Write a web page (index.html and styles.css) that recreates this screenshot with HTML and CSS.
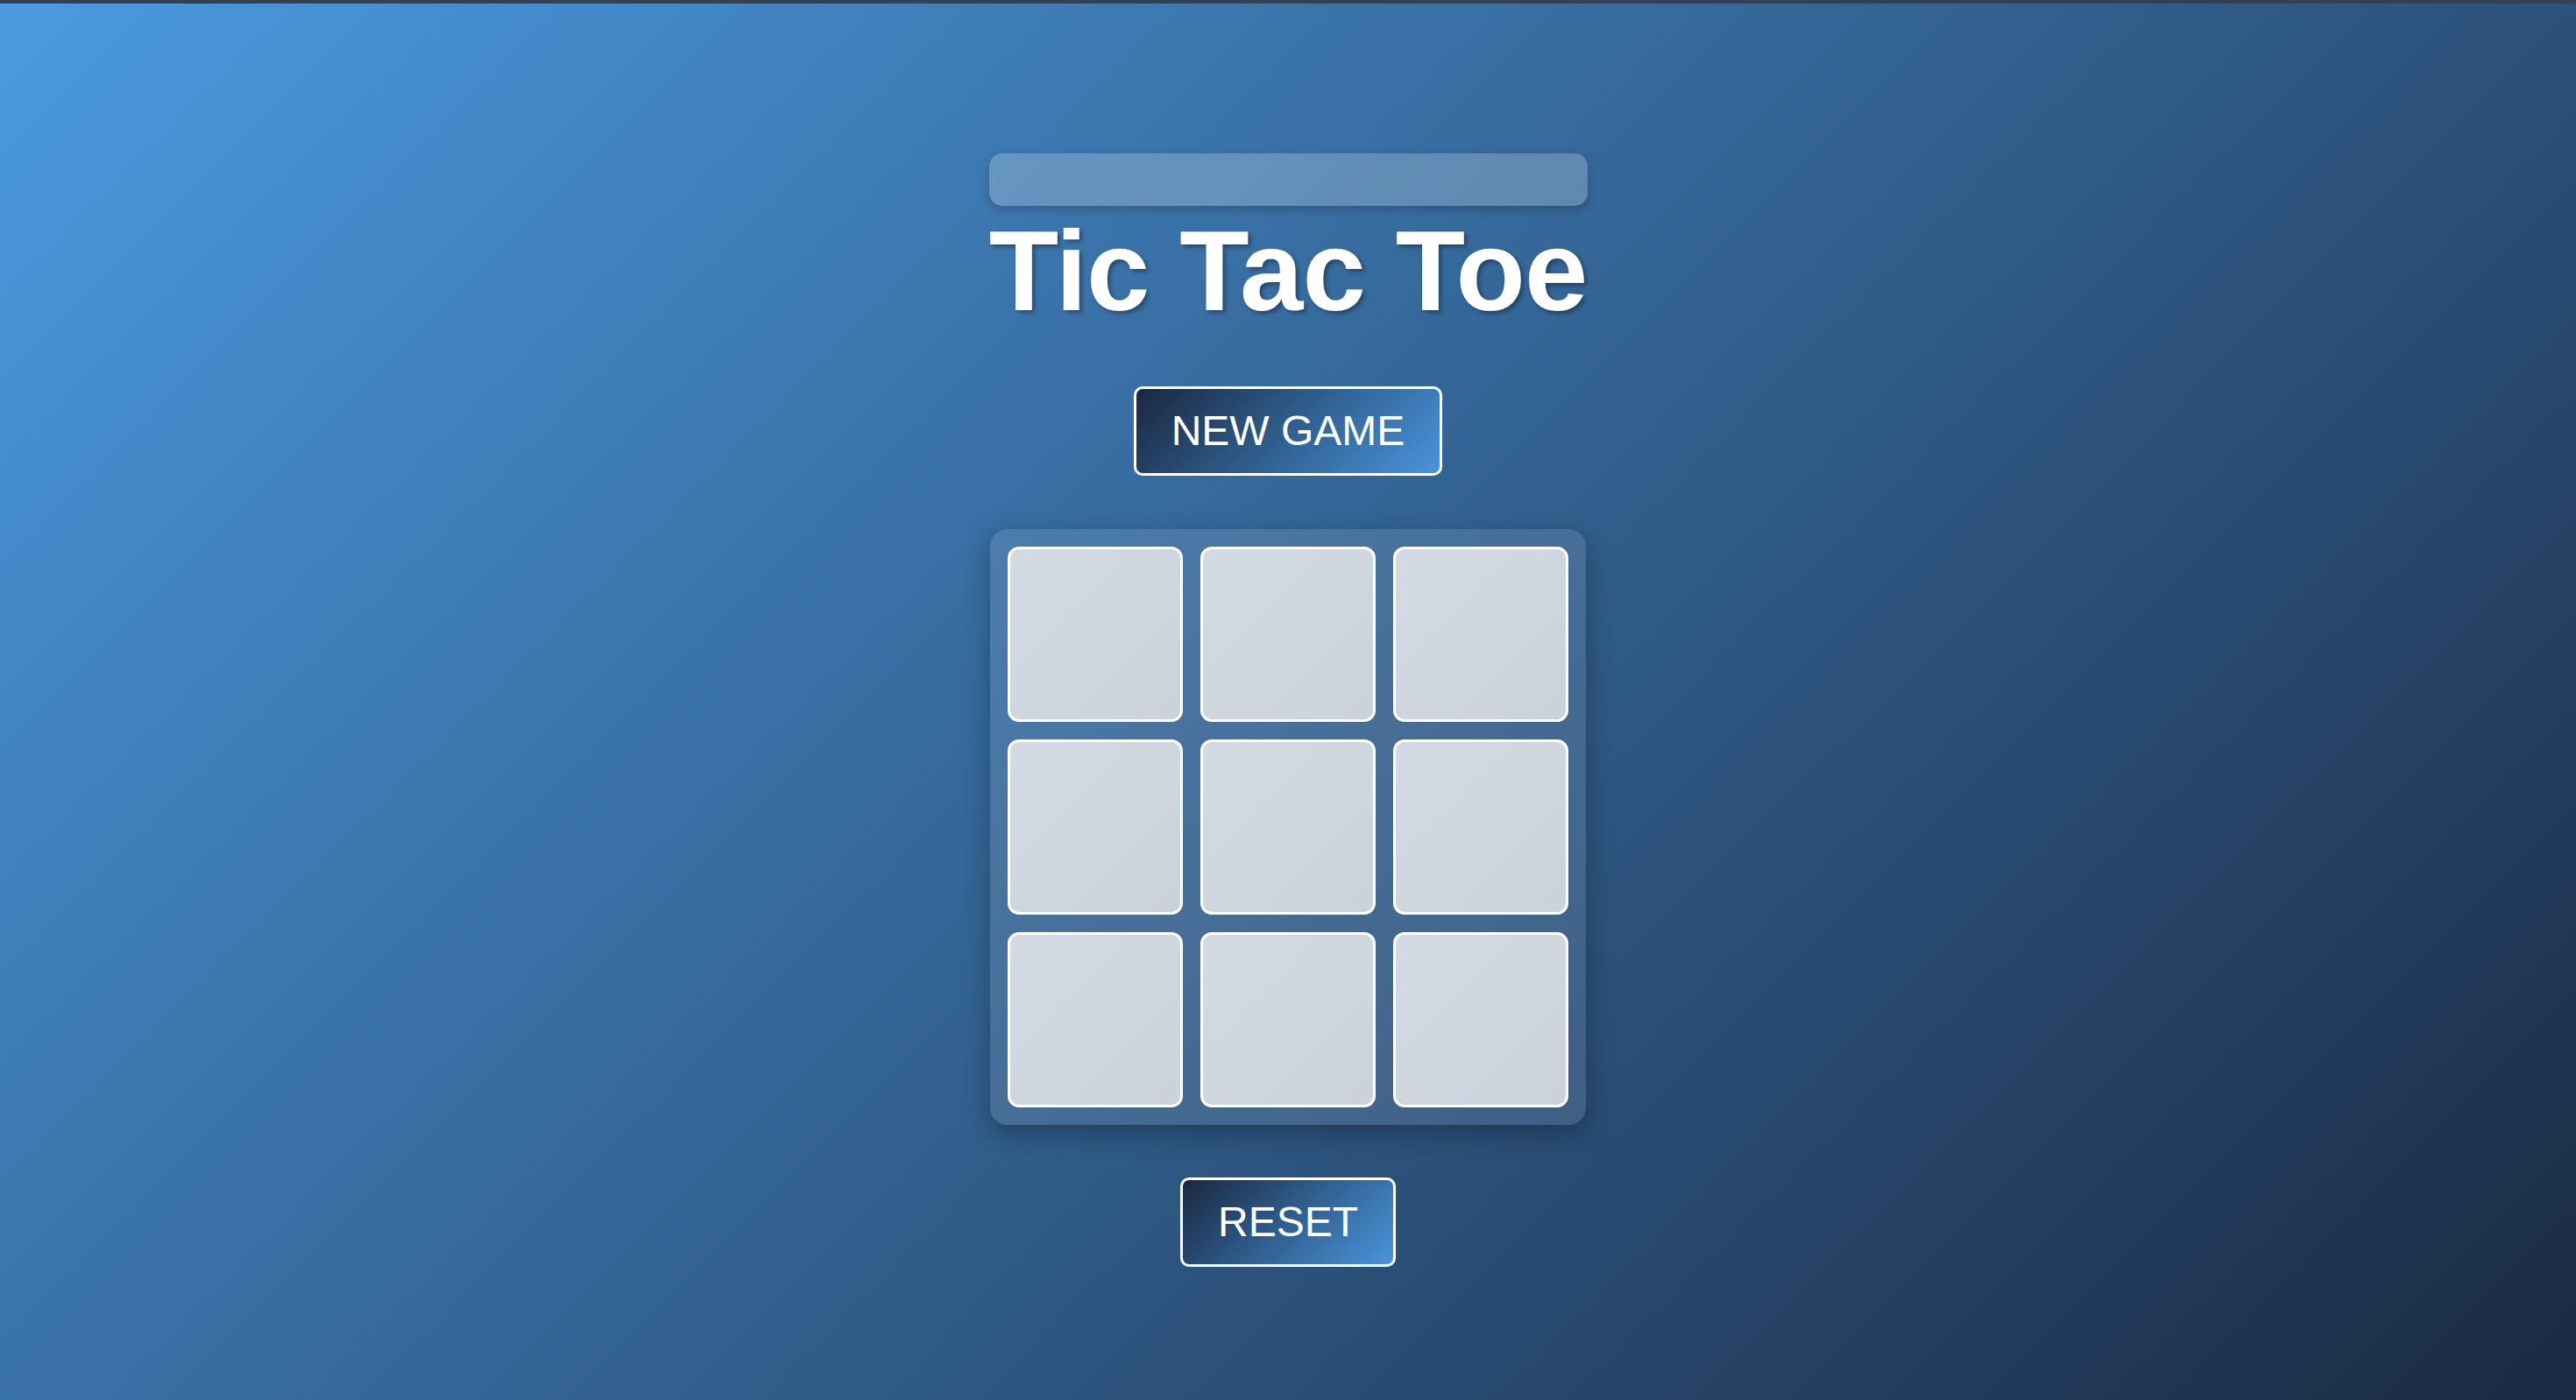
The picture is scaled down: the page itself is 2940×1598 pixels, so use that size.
FILE: index.html
```html
<!DOCTYPE html>
<html lang="en">
<head>
<meta charset="utf-8">
<title>Tic Tac Toe</title>
<link rel="stylesheet" href="styles.css">
</head>
<body>
<div class="topline"></div>
<main class="game">
  <div class="status"></div>
  <h1 class="title">Tic Tac Toe</h1>
  <button class="btn btn-new">NEW GAME</button>
  <div class="board">
    <div class="cell"></div>
    <div class="cell"></div>
    <div class="cell"></div>
    <div class="cell"></div>
    <div class="cell"></div>
    <div class="cell"></div>
    <div class="cell"></div>
    <div class="cell"></div>
    <div class="cell"></div>
  </div>
  <button class="btn btn-reset">RESET</button>
</main>
</body>
</html>
```
FILE: styles.css
```css
html, body {
  margin: 0;
  padding: 0;
  height: 100%;
}

body {
  font-family: "Liberation Sans", Arial, sans-serif;
  background: linear-gradient(135deg, #4b9ae0 0%, #1a2942 100%);
  overflow: hidden;
}

.topline {
  height: 4px;
  background: #363f4e;
}

.game {
  display: flex;
  flex-direction: column;
  align-items: center;
  padding-top: 171px;
}

.status {
  width: 683px;
  height: 60px;
  border-radius: 15px;
  background: rgba(255, 255, 255, 0.22);
  box-shadow: 0 4px 12px rgba(0, 0, 0, 0.2);
}

.title {
  margin: 0 0 57px;
  font-size: 130px;
  font-weight: 700;
  line-height: 149px;
  color: #ffffff;
  letter-spacing: -1px;
  text-shadow: 3px 3px 5px rgba(0, 0, 0, 0.35);
}

.btn {
  font-family: "Liberation Sans", Arial, sans-serif;
  font-size: 48px;
  line-height: 56px;
  color: #ffffff;
  padding: 20px 40px;
  border: 3px solid #ffffff;
  border-radius: 10px;
  background: linear-gradient(135deg, #1b2840 0%, #2f5f8e 50%, #4a94dc 100%);
  cursor: pointer;
}

.board {
  margin: 61px 0 60px;
  display: grid;
  grid-template-columns: repeat(3, 200px);
  grid-template-rows: repeat(3, 200px);
  gap: 20px;
  padding: 20px;
  border-radius: 20px;
  background: rgba(255, 255, 255, 0.1);
  box-shadow: 0 10px 30px rgba(0, 0, 0, 0.3);
}

.cell {
  box-sizing: border-box;
  border: 3px solid #ffffff;
  border-radius: 13px;
  background: linear-gradient(135deg, #d4dae3 0%, #ccd2da 100%);
}
```
